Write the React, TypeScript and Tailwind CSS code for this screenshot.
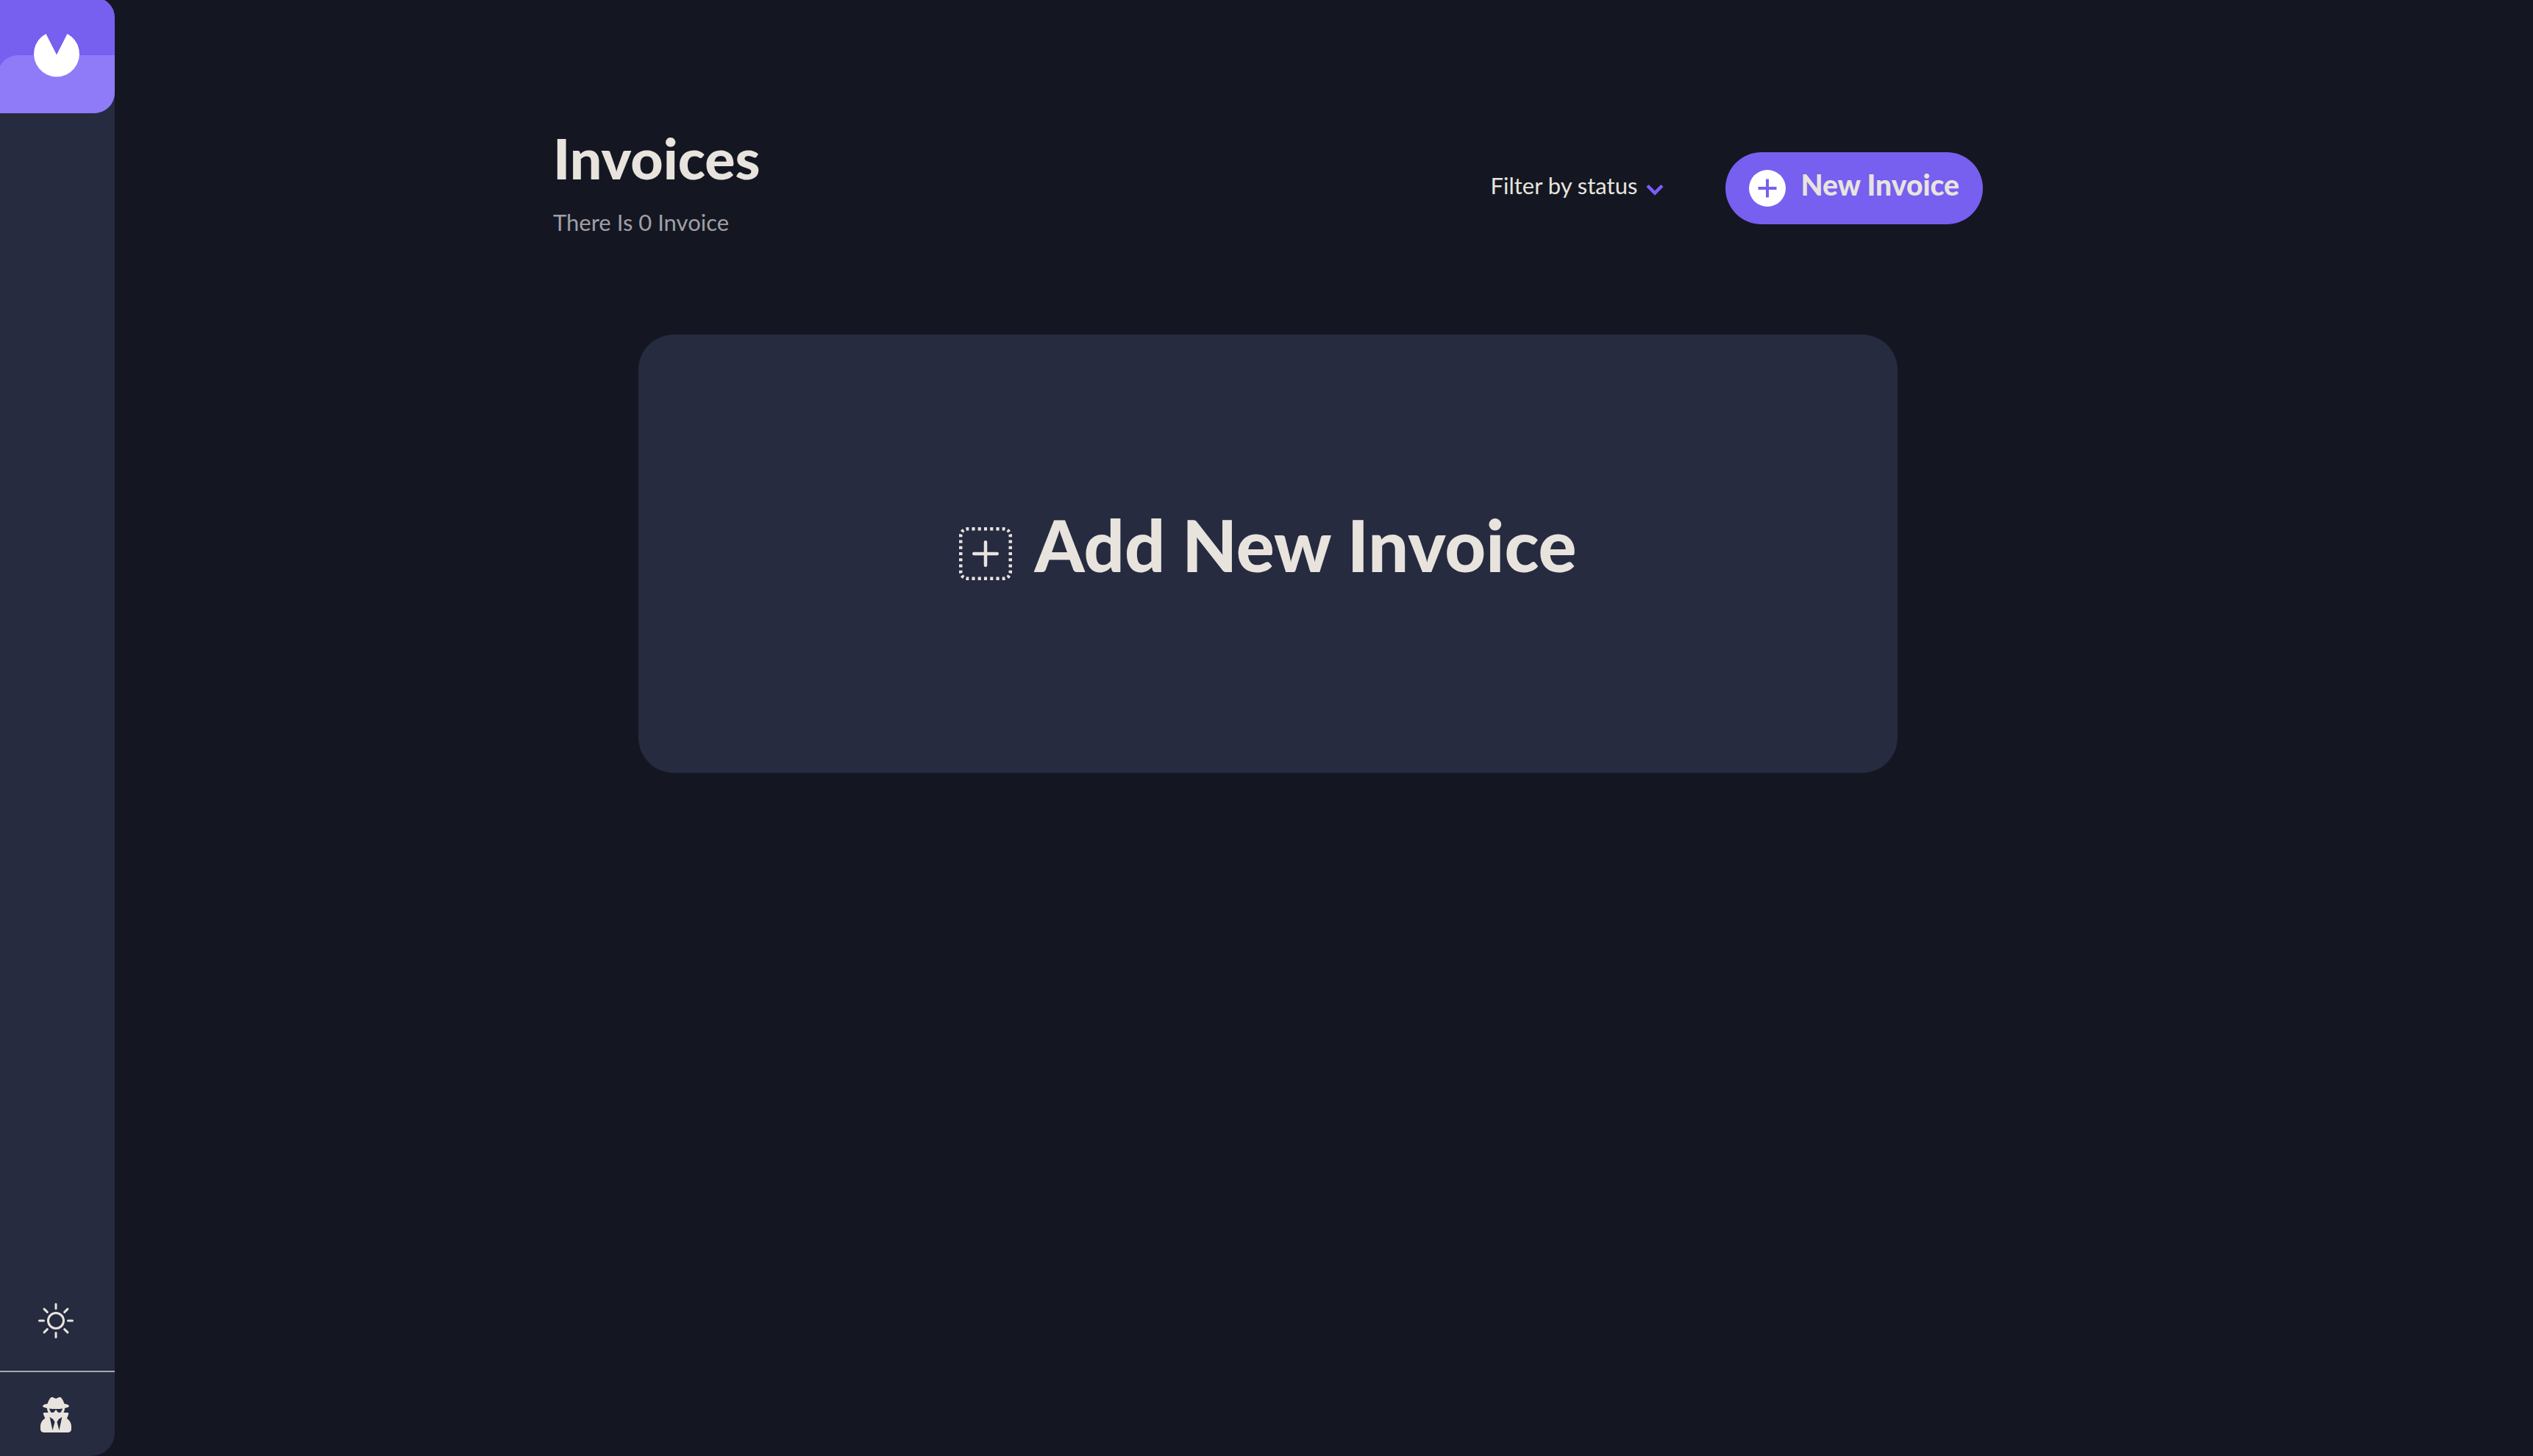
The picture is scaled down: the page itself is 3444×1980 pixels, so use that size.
import { BsPlusSquareDotted, BsSun } from "react-icons/bs";
import { FaUserSecret } from "react-icons/fa";

function Logo() {
  return (
    <svg viewBox="0 0 156 154" className="block w-full" role="img" aria-label="Home">
      <path d="M0 0H142C151 5 156 14 156 24V126A28 28 0 0 1 128 154H0Z" fill="#775ff0" />
      <path d="M0 90C5 80 15 75 26 75H156V126A28 28 0 0 1 128 154H0Z" fill="#8f7af7" />
      <path d="M62.500 46L77 74.500L91.500 46A31 31 0 1 1 62.500 46Z" fill="#fff" />
    </svg>
  );
}

function Sidebar() {
  return (
    <aside className="flex w-[156px] shrink-0 flex-col justify-between rounded-br-[32px] bg-[#262b40]">
      <a href="#" className="block bg-linear-to-b from-[#141722] from-50% to-transparent to-50%">
        <Logo />
      </a>
      <div>
        <button type="button" aria-label="Toggle theme" className="mx-auto mb-11 block pr-1">
          <BsSun className="size-12" />
        </button>
        <div className="border-t-2 border-[#a8a9af] pt-[34px] pb-8">
          <button type="button" aria-label="Account" className="mx-auto block pr-1">
            <FaUserSecret className="size-12" />
          </button>
        </div>
      </div>
    </aside>
  );
}

export default function App() {
  return (
    <div className="flex min-h-screen bg-[#141722] font-['Lato',sans-serif] text-[#e8e4dd]">
      <Sidebar />
      <main className="flex-1 pr-[152px]">
        <div className="mx-auto max-w-[1944px] pt-[174px]">
          <header className="flex items-center justify-between">
            <div>
              <h1 className="text-[77px] leading-20 font-black">Invoices</h1>
              <p className="mt-7 text-[31px] leading-10 text-[#a09fa5]">There Is 0 Invoice</p>
            </div>
            <div className="mt-4 flex items-center gap-[84px]">
              <button type="button" className="flex items-center gap-3 text-[31px] leading-10">
                <span className="pb-[0.25em]">Filter by status</span>
                <svg viewBox="0 0 24 16" className="mt-1 w-6" fill="none" aria-hidden="true">
                  <path d="M2 2.500L12 12.500L22 2.500" stroke="#7c5dfa" strokeWidth="4.500" />
                </svg>
              </button>
              <button
                type="button"
                className="flex items-center gap-5 rounded-full bg-[#775ff0] px-8 py-6 text-[39px] leading-10 font-black"
              >
                <svg viewBox="0 0 50 50" className="size-[50px]" aria-hidden="true">
                  <circle cx="25" cy="25" r="25" fill="#fff" />
                  <path d="M12.500 25H37.500M25 12.500V37.500" stroke="#775ff0" strokeWidth="4" />
                </svg>
                <span className="pb-[0.25em]">New Invoice</span>
              </button>
            </div>
          </header>
          <section className="mx-auto mt-[133px] flex h-[596px] max-w-[1712px] items-center justify-center rounded-[48px] bg-[#262b40]">
            <button type="button" className="flex items-center gap-[30px] text-[97px] leading-24 font-black">
              <BsPlusSquareDotted className="size-[72px]" />
              <span className="pb-[0.25em]">Add New Invoice</span>
            </button>
          </section>
        </div>
      </main>
    </div>
  );
}
